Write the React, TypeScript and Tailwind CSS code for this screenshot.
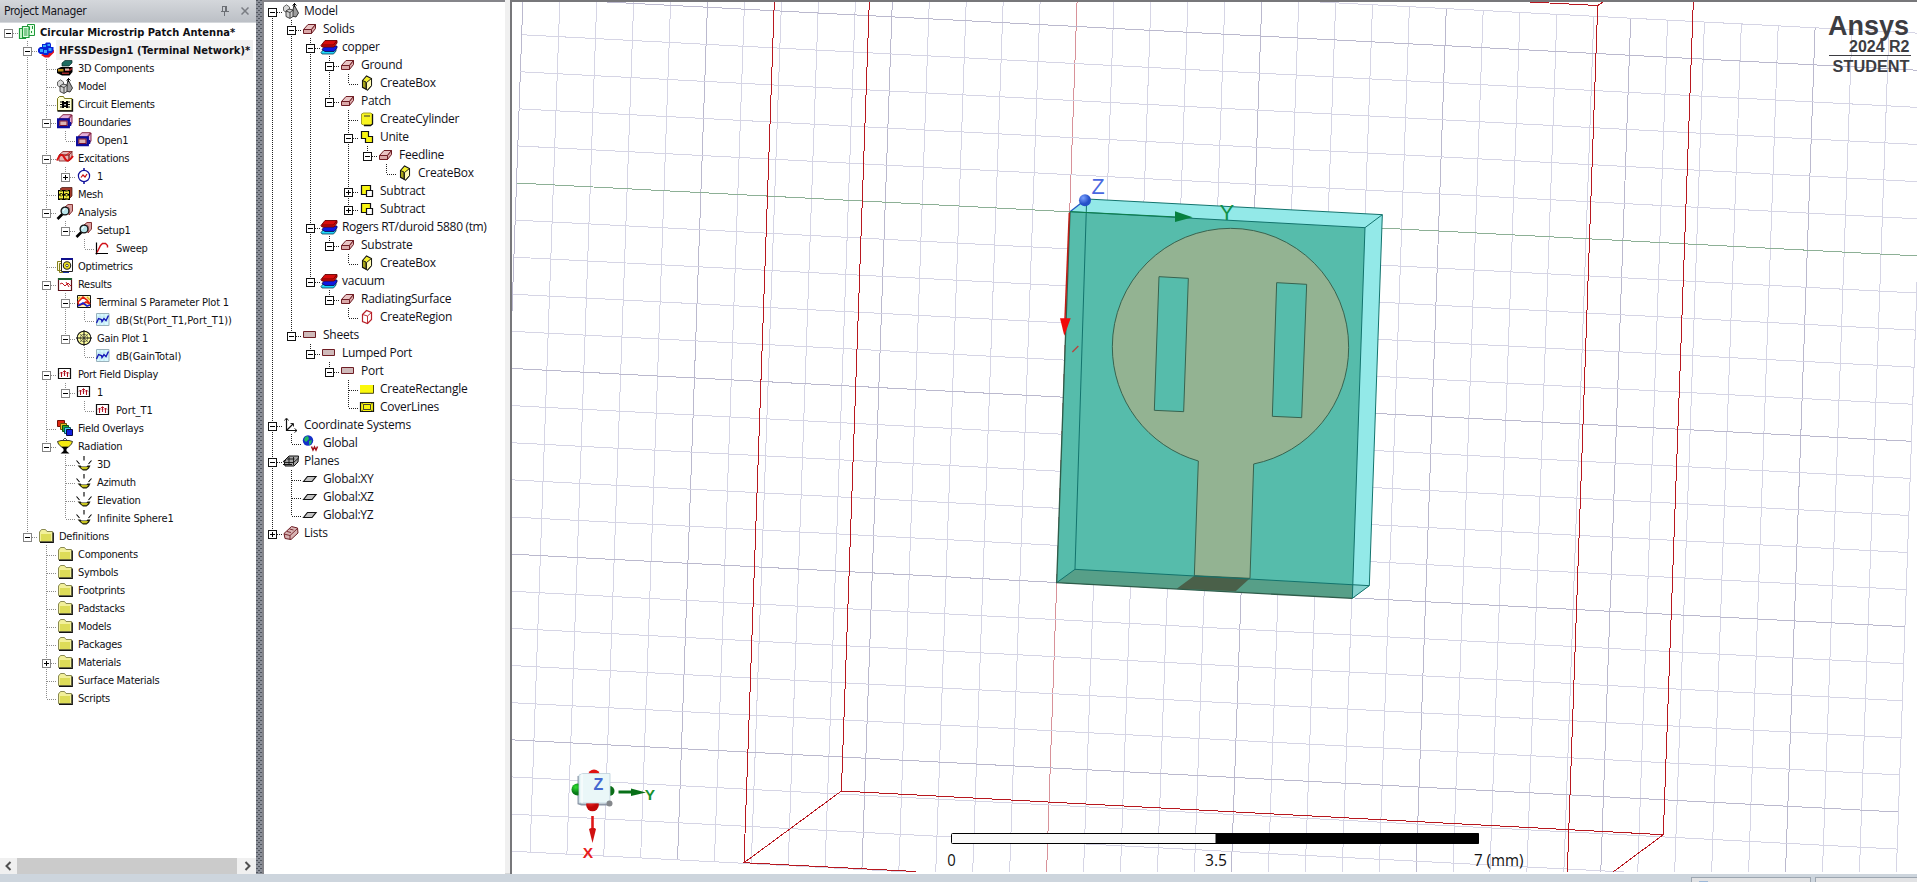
import React from "react";

type Row = [level: number, label: string, icon: string, mark?: "-" | "+", style?: string];

const BOLD = "ml-[2px] px-[3px] leading-[18px] font-bold tracking-[0.04px]";

const project: Row[] = [
  [0, "Circular Microstrip Patch Antenna*", "project", "-", BOLD],
  [1, "HFSSDesign1 (Terminal Network)*", "hfss", "-", `${BOLD} bg-[#f1f1f1]`],
  [2, "3D Components", "comp3d"],
  [2, "Model", "model"],
  [2, "Circuit Elements", "circuit"],
  [2, "Boundaries", "boundary", "-"],
  [3, "Open1", "boundary"],
  [2, "Excitations", "excite", "-"],
  [3, "1", "source", "+"],
  [2, "Mesh", "mesh"],
  [2, "Analysis", "analysis", "-"],
  [3, "Setup1", "analysis", "-"],
  [4, "Sweep", "sweep"],
  [2, "Optimetrics", "opti"],
  [2, "Results", "results", "-"],
  [3, "Terminal S Parameter Plot 1", "splot", "-", "pl-[5px] tracking-[-0.18px]"],
  [4, "dB(St(Port_T1,Port_T1))", "trace", undefined, "pl-[5px] tracking-[0.02px]"],
  [3, "Gain Plot 1", "gain", "-"],
  [4, "dB(GainTotal)", "trace", undefined, "pl-[5px] tracking-[-0.1px]"],
  [2, "Port Field Display", "portfield", "-"],
  [3, "1", "portfield", "-"],
  [4, "Port_T1", "portfield", undefined, "pl-[5px] tracking-[0px]"],
  [2, "Field Overlays", "overlays"],
  [2, "Radiation", "radiation", "-"],
  [3, "3D", "sphere"],
  [3, "Azimuth", "sphere"],
  [3, "Elevation", "sphere"],
  [3, "Infinite Sphere1", "sphere", undefined, "pl-[5px] tracking-[-0.13px]"],
  [1, "Definitions", "folder", "-"],
  [2, "Components", "folder"],
  [2, "Symbols", "folder"],
  [2, "Footprints", "folder"],
  [2, "Padstacks", "folder"],
  [2, "Models", "folder"],
  [2, "Packages", "folder"],
  [2, "Materials", "folder", "+"],
  [2, "Surface Materials", "folder"],
  [2, "Scripts", "folder"],
];

const history: Row[] = [
  [0, "Model", "model", "-"],
  [1, "Solids", "solid", "-"],
  [2, "copper", "material", "-"],
  [3, "Ground", "solid", "-"],
  [4, "CreateBox", "box"],
  [3, "Patch", "solid", "-"],
  [4, "CreateCylinder", "cylinder"],
  [4, "Unite", "unite", "-"],
  [5, "Feedline", "solid", "-"],
  [6, "CreateBox", "box"],
  [4, "Subtract", "subtract", "+"],
  [4, "Subtract", "subtract", "+"],
  [2, "Rogers RT/duroid 5880 (tm)", "material", "-", "pl-[5px] tracking-[-0.34px]"],
  [3, "Substrate", "solid", "-"],
  [4, "CreateBox", "box"],
  [2, "vacuum", "material", "-"],
  [3, "RadiatingSurface", "solid", "-"],
  [4, "CreateRegion", "region"],
  [1, "Sheets", "sheet", "-"],
  [2, "Lumped Port", "sheet", "-"],
  [3, "Port", "sheet", "-"],
  [4, "CreateRectangle", "rect"],
  [4, "CoverLines", "cover"],
  [0, "Coordinate Systems", "axes", "-"],
  [1, "Global", "global"],
  [0, "Planes", "planes", "-"],
  [1, "Global:XY", "plane"],
  [1, "Global:XZ", "plane"],
  [1, "Global:YZ", "plane"],
  [0, "Lists", "lists", "+"],
];

const icons: Record<string, React.ReactNode> = {
  project: (
    <>
      <path d="M8.500 .5h7v11h-7z" fill="#eaffea" stroke="#1f9a3a" />
      <path d="M10 3h1v3h-1zM13 2h1v3h-1zM12 7h1v2h-1z" fill="#1f9a3a" />
      <path d="M.5 4.500h6v10h-6z" fill="#d7ffd7" stroke="#1f9a3a" strokeWidth="1.200" />
      <path d="M3.500 2.500h6.500v11h-6.500z" fill="#e4ffe4" stroke="#1f9a3a" strokeWidth="1.200" />
      <path d="M5 5h3.500M5 7h3.500M5 9h3.500M5 11h3.500" stroke="#1f9a3a" />
    </>
  ),
  hfss: (
    <>
      <path d="M3 13l4 2.500h4l5-5V8L6 11z" fill="#e01020" />
      <path d="M4 2h3l1-1.500h4L13 2v3h2.500v4l-2 2H11l-1 2H6l-1-1H2l-2-2V7l2-2h2z" fill="#0a24d8" />
      <path d="M5 3h3v2H5zM9.500 2h2.500v2H9.500zM2 7h3v3H2zM6 8h3v3H6zM10.500 6h3v3h-3z" fill="#35a8ff" />
    </>
  ),
  comp3d: (
    <>
      <path d="M5 3l3-2.500h7V3l-3 3H5z" fill="#1d6b60" stroke="#0b2d2a" strokeWidth=".7" />
      <path d="M0 9l4-2h11.500v5l-3 3.500H5L0 13z" fill="#000" />
      <path d="M1 9h5.500v2.500H1z" fill="#b58a1c" />
      <path d="M8 9h5l2-1.500v2L13 11H8z" fill="#9a1f1f" />
      <path d="M8 8.500h4v2H8z" fill="#e0b8b0" />
      <path d="M5 12.500h7v1.500H5z" fill="#a02828" />
    </>
  ),
  model: (
    <>
      <path d="M.5 4l3-2.200 3 2.200v3.500l-3 2-3-2z" fill="#d9d9d9" stroke="#555" strokeWidth=".9" />
      <path d="M11 1.500l4.500 8.500-2.500 4-4-1z" fill="#9c9c9c" stroke="#222" strokeWidth=".9" />
      <path d="M11.500 0v4M9.500 2.500l2-2 2 2" stroke="#111" fill="none" />
      <path d="M3 8l3-2 4 1v6.500l-3 2-4-2z" fill="#cfcfcf" stroke="#333" strokeWidth=".9" />
      <path d="M3 8l4 1.500V15M7 9.500L10 7" stroke="#333" strokeWidth=".9" fill="none" />
    </>
  ),
  circuit: (
    <>
      <path d="M.5 14.500v-12l2-2h4l1 2h7.500v12z" fill="#ffffd8" stroke="#77771a" />
      <path d="M.5 15h15V3" stroke="#111" strokeWidth="1.300" fill="none" />
      <path d="M5 5h2v1h2V5h2v7H9v-1H7v1H5z" fill="#000" />
      <path d="M3 6h2M3 8.500h2M3 11h2M11 6h2M11 8.500h2M11 11h2" stroke="#000" />
      <path d="M7.300 8h1.500v1.500H7.300z" fill="#fff" />
    </>
  ),
  boundary: (
    <>
      <path d="M2 4.500L6 .7h8.500L11 5zM12 13l3-4V1L12 5z" fill="#e3b0dc" stroke="#7a1230" strokeWidth=".9" />
      <path d="M1.200 5.500h10.500v7.500H1.200z" fill="#dcb4b4" stroke="#0c0c9c" strokeWidth="2.400" />
      <path d="M2.800 7h7.200v4.500H2.800z" fill="none" stroke="#7a1230" strokeWidth="1" />
      <path d="M13.500 12V8" stroke="#0c0c9c" strokeWidth="1.500" />
    </>
  ),
  excite: (
    <>
      <path d="M2 5l4-3.500h9l-3 3.500zM2 5h10v6H2zM12 5l3-3.500V8l-3 3z" fill="#e5b6b6" stroke="#8a2a2a" strokeWidth=".9" />
      <path d="M0 10.500C2 5 5 3 7 7s4 6 9-1" stroke="#d81010" strokeWidth="2" fill="none" />
      <path d="M8 6l5-4" stroke="#d81010" />
    </>
  ),
  source: (
    <>
      <circle cx="8" cy="8" r="5.600" fill="#fff" stroke="#10109c" strokeWidth="1.200" />
      <path d="M8 0v3M8 13v3" stroke="#10109c" strokeWidth="1.500" />
      <path d="M5 9.500L7 7l2 2 2-3" stroke="#c81010" fill="none" strokeWidth="1.200" />
    </>
  ),
  mesh: (
    <>
      <path d="M3 3l2-1.500h10V10l-2 2z" fill="#a43a2a" stroke="#401008" strokeWidth=".7" />
      <path d="M1 4h12v10H1z" fill="#000" />
      <path d="M2 5l2 1 2-1v3L4 7 2 8zM7 5l2.500 1L12 5v3L9.500 7 7 8zM2 9.500l2 1 2-1v3.300l-2-1-2 1zM7 9.500l2.500 1 2.500-1v3.300l-2.500-1-2.500 1zM4 8h1v1.500H4zM9 8h1v1.500H9z" fill="#f8f540" />
      <path d="M3 5h2M8.500 5H11M3 13h2M8.500 13H11M2.500 9h3M8 9h3" stroke="#f8f540" strokeWidth=".8" />
    </>
  ),
  analysis: (
    <>
      <path d="M8 3l3-2.500h4.500V7L12 11V4z" fill="#d9a3a3" stroke="#7a2020" strokeWidth=".9" />
      <path d="M.5 15l5-5" stroke="#000" strokeWidth="2.600" />
      <circle cx="8" cy="7" r="3.900" fill="#b8e4ea" stroke="#111" strokeWidth="1.300" />
      <path d="M6 7l2-2.500" stroke="#fff" strokeWidth="1.200" />
    </>
  ),
  sweep: (
    <>
      <path d="M1.500 2.500v12M.5 13.500h12.500" stroke="#000" strokeWidth="1.200" />
      <path d="M2 12.500L5.500 5.500 7.500 3.500h3l2 2v2" stroke="#d01018" strokeWidth="1.400" fill="none" />
    </>
  ),
  opti: (
    <>
      <path d="M.5 3.500h8v9h-8zM2.500 5.500h8v9h-8z" fill="#fffbe0" stroke="#85801c" />
      <path d="M4.500 1.500h11v12h-11z" fill="#fff" stroke="#222" />
      <path d="M4 0h12v2H4z" fill="#10108c" />
      <circle cx="10" cy="7.500" r="3.700" fill="#f4ea20" stroke="#222" strokeWidth="1.100" />
      <circle cx="10" cy="7.500" r="1.300" fill="#fff" stroke="#222" strokeWidth=".8" />
      <path d="M6 14.500h6" stroke="#1530a0" />
    </>
  ),
  results: (
    <>
      <path d="M1.500 2.500h13v12h-13z" fill="#fff" stroke="#5a1018" strokeWidth="1.200" />
      <path d="M1 2h14v2H1z" fill="#1d5c30" />
      <path d="M3 8l2-1 3 3 3-3 3 3M9 6l3 5" stroke="#c01820" strokeWidth="1" fill="none" />
    </>
  ),
  splot: (
    <>
      <path d="M1.500 1.500h13v12h-13z" fill="#fff6b8" stroke="#111" />
      <path d="M2 8l5-5 4 3 3 4-4-2-3 2-4 1z" fill="#fff" stroke="#e02010" strokeWidth="1.600" />
      <path d="M2 12l5-3 4 3 3-1" stroke="#1820d0" strokeWidth="1.600" fill="none" />
      <path d="M11 3l3 3M2 5l2-2" stroke="#e0b020" strokeWidth="1.500" />
    </>
  ),
  trace: (
    <>
      <path d="M1.500 1.500h12.500v12h-12.500z" fill="#d8f8ff" stroke="#9ab2bc" />
      <path d="M2 5h12M2 9h12M5 2v11M9 2v11" stroke="#b6dfe8" strokeWidth=".7" />
      <path d="M1.500 11l2-4.500 3 1 .5 2 2-3 2 2 2.500-5" stroke="#1418b8" strokeWidth="1.400" fill="none" />
    </>
  ),
  gain: (
    <>
      <circle cx="8" cy="8" r="6.800" fill="#ffffa0" stroke="#111" strokeWidth="1.100" />
      <circle cx="8" cy="8" r="3.800" fill="none" stroke="#333" strokeWidth=".6" />
      <path d="M8 0v16M0 8h16" stroke="#111" strokeWidth="1" />
      <path d="M3.500 3.500l9 9M12.500 3.500l-9 9" stroke="#333" strokeWidth=".6" />
    </>
  ),
  portfield: (
    <>
      <path d="M1.500 2.500h12v10h-12z" fill="#fff" stroke="#111" strokeWidth="1.200" />
      <path d="M4.500 11V6M7.500 10V5M10.500 11V6" stroke="#b01020" strokeWidth="1.100" />
      <path d="M3 7.500L4.500 6 6 7.500M6 6l1.500-1.500L9 6M9 7.500L10.500 6 12 7.500" stroke="#b01020" fill="none" strokeWidth=".9" />
    </>
  ),
  overlays: (
    <>
      <path d="M.5 .5h7v6h-7z" fill="#e02810" stroke="#701008" />
      <path d="M3.500 3.500h6v6h-6z" fill="#e8c020" stroke="#705008" />
      <path d="M5.500 5.500h6v6h-6z" fill="#20b030" stroke="#0a5010" />
      <path d="M7.500 7.500h6v6h-6z" fill="#40d8e8" stroke="#105060" />
      <path d="M9.500 9.500h6v6h-6z" fill="#1020e0" stroke="#080840" />
    </>
  ),
  radiation: (
    <>
      <path d="M6 2l2-2 2 2" stroke="#555" fill="none" />
      <path d="M.5 3.500L4 2.500h8l3.500 1-1 2.500-3 3h-7l-3-3z" fill="#f4ea10" stroke="#222" strokeWidth=".9" />
      <path d="M4.500 9h7l-2 2v2l3 2.500h-9l3-2.500v-2z" fill="#000" />
    </>
  ),
  sphere: (
    <>
      <path d="M8 0v4.500M.5 4.500l3 3.500M15.500 4.500l-3 3.500" stroke="#000" strokeWidth="1.100" />
      <path d="M1.500 9.500h3l1 1h5l1-1h3l-1.500 3-2.500 2h-3.500l-2.500-2z" fill="#1a1a08" />
      <path d="M4.500 11h8l-2 2.200h-4z" fill="#c8c420" />
    </>
  ),
  folder: (
    <>
      <path d="M1.500 13.500V4l2-2.500h4L9 3.500h5.500v10z" fill="#f2f09a" stroke="#8a8a52" />
      <path d="M3 6h10v7H3z" fill="#dddc58" />
      <path d="M2 14.300h13.300V4.500" stroke="#111" strokeWidth="1.200" fill="none" />
    </>
  ),
  solid: (
    <>
      <path d="M1.500 8.500L6 3.500h7.500L9.500 8.500z" fill="#e9c3c3" stroke="#6e1d24" />
      <path d="M1.500 8.500h8V12.500h-8z" fill="#dba9a9" stroke="#6e1d24" />
      <path d="M9.500 8.500l4-5v4l-4 5z" fill="#dba9a9" stroke="#6e1d24" />
    </>
  ),
  material: (
    <>
      <path d="M0 13.500L3 10h12v2l-2.500 3H1z" fill="#20d8f8" stroke="#0a3a50" strokeWidth=".8" />
      <path d="M1 10.500L4 7h12v2l-3 3.500H4z" fill="#1018e0" stroke="#080850" strokeWidth=".8" />
      <path d="M0 6.500L4 1.500h12v2.500l-3 4H1z" fill="#d80c0c" stroke="#600" strokeWidth=".9" />
      <path d="M1 6h11.500L15.500 2" stroke="#600" strokeWidth=".8" fill="none" />
    </>
  ),
  box: (
    <>
      <path d="M3.500 5.500l4-4.500 5 2.500v7l-4 4.500-5-2.500z" fill="#f4f030" stroke="#111" strokeWidth="1.100" />
      <path d="M3.500 5.500l3.500 1.500v7l-3.500-2z" fill="#a8a418" stroke="#111" strokeWidth=".9" />
      <path d="M7.500 7.500l5-4v7l-4 4.500-1-.5z" fill="#fffbb0" stroke="#111" strokeWidth=".9" />
    </>
  ),
  cylinder: (
    <>
      <path d="M2.500 3l2-1h7l2 1v10l-2 1h-7l-2-1z" fill="#f8f420" stroke="#9a9618" strokeWidth=".9" />
      <path d="M5 5h6" stroke="#333" />
      <path d="M13.500 3v10l-2 1.500H5" stroke="#111" strokeWidth="1.300" fill="none" />
    </>
  ),
  unite: <path d="M2.500 2.500h7v5h4v6h-7v-4h-4z" fill="#f8f410" stroke="#111" strokeWidth="1.200" />,
  subtract: (
    <>
      <path d="M2.500 2.500h9v9h-9z" fill="#f8f410" stroke="#111" strokeWidth="1.200" />
      <path d="M7.500 7.500h6v6h-6z" fill="#fff" stroke="#111" strokeWidth="1.200" />
    </>
  ),
  region: (
    <>
      <path d="M3.500 5.500l4-4 5 2v7l-4 4-5-2z" fill="#fff" stroke="#b82028" strokeWidth="1.200" />
      <path d="M3.500 5.500l5 1.500 4-3.500M8.500 7v7.500" fill="none" stroke="#b82028" strokeWidth=".9" />
    </>
  ),
  sheet: <path d="M1.500 4.500h12v6h-12z" fill="#cfbaba" stroke="#6e1d24" />,
  rect: (
    <>
      <path d="M1 4h13v8H1z" fill="#fbf80c" />
      <path d="M1 12.300h13.500V4" stroke="#4c4a10" strokeWidth="1" fill="none" />
    </>
  ),
  cover: (
    <>
      <path d="M1.500 3.500h13v9h-13z" fill="#f8f410" stroke="#111" strokeWidth="1.200" />
      <path d="M4.500 5.500h7v5h-7z" fill="#f8f410" stroke="#333" strokeWidth=".9" />
      <path d="M2 3.500l2.500 2M14 3.500l-2.500 2M2 12.500l2.500-2M14 12.500l-2.500-2" stroke="#333" strokeWidth=".7" />
    </>
  ),
  axes: (
    <>
      <path d="M3.500 2v11.500H14M4 13l6-6" stroke="#111" strokeWidth="1.200" fill="none" />
      <path d="M1.500 3.500l2-2.500 2 2.500M11.500 11.500l2.500 2-2.500 2M7.500 6.500h3v3" stroke="#111" fill="none" strokeWidth=".9" />
    </>
  ),
  global: (
    <>
      <circle cx="6" cy="5.500" r="5.200" fill="#1430c8" />
      <path d="M3 2l3-1 1 3-3 3-2-2zM7 6l3-1-1 4-2 1z" fill="#20b860" />
      <path d="M9.500 11.500L11 15l1.500-3 1.500 3 1.500-3.500" stroke="#a01018" strokeWidth="1.500" fill="none" />
    </>
  ),
  planes: (
    <>
      <path d="M1 8l5-5h9.500l-.5 6-4 4H2z" fill="#a4a4a4" stroke="#111" />
      <path d="M1 9.500h9.500l4.500-4M3.500 6h8M6 4v8M10.500 4v8" stroke="#111" strokeWidth=".9" fill="none" />
      <path d="M0 8.500l3-1M0 11.500h9" stroke="#111" />
    </>
  ),
  plane: <path d="M1.500 10.500l4-5h8.500l-4 5z" fill="#c4c4c4" stroke="#111" strokeWidth="1.200" />,
  lists: (
    <>
      <path d="M1 8.500l7.500-7L14.500 3l.5 5-7 6.500-6-1z" fill="#d8b4b4" stroke="#6e1d24" />
      <path d="M1 9l6 1.500 7.500-7M7 10.500v4M4 6.500l4 1M6.500 4l4 1" stroke="#6e1d24" strokeWidth=".9" fill="none" />
    </>
  ),
};

function Icon({ name }: { name: string }) {
  return (
    <svg viewBox="0 0 16 16" className="h-4 w-4 shrink-0 overflow-visible">
      {icons[name]}
    </svg>
  );
}

/** True when a later sibling at `level` follows row `i` before the branch closes. */
function continues(rows: Row[], i: number, level: number) {
  for (let j = i + 1; j < rows.length; j++) {
    if (rows[j][0] === level) return true;
    if (rows[j][0] < level) return false;
  }
  return false;
}

function Tree({ rows, line, box, font, text }: { rows: Row[]; line: string; box: string; font: string; text: string }) {
  return (
    <div className={`flex flex-col ${font}`}>
      {rows.map(([level, label, icon, mark, style], i) => (
        <div key={i} className="flex h-[18px] items-center whitespace-nowrap">
          {Array.from({ length: level + 1 }, (_, l) => {
            const own = l === level;
            const below = continues(rows, i, l);
            const above = own && (l > 0 || i > 0);
            const y1 = above || !own ? 0 : 10;
            const y2 = below ? 18 : 10;
            return (
              <svg key={l} className="h-[18px] w-[19px] shrink-0" shapeRendering="crispEdges">
                {(above || below) && (own || below) && (
                  <path d={`M8.500 ${y1}V${y2}`} stroke={line} strokeDasharray="1 1" />
                )}
                {own && <path d="M9 10.500H19" stroke={line} strokeDasharray="1 1" />}
                {own && mark && (
                  <>
                    <path d="M4.500 6.500h8v8h-8z" fill="#fff" stroke={box} />
                    <path d={mark === "+" ? "M6 10.500h5M8.500 8v5" : "M6 10.500h5"} stroke="#000" />
                  </>
                )}
              </svg>
            );
          })}
          <Icon name={icon} />
          <span className={style ?? text}>{label}</span>
        </div>
      ))}
    </div>
  );
}

const O = [1069.7, 211.8];
const U = [36.88, 1.92];
const V = [-1.298, 37.07];
const at = (k: number, j: number) => `${O[0] + k * U[0] + j * V[0]} ${O[1] + k * U[1] + j * V[1]}`;
const range = (a: number, b: number) => Array.from({ length: b - a + 1 }, (_, i) => a + i);

function Grid() {
  const tone = (n: number, axis: string) => (n === 0 ? axis : n % 5 === 0 ? "#bbb9ce" : "#d6d5e5");
  return (
    <g fill="none" shapeRendering="crispEdges">
      {range(-15, 23).map((k) => (
        <path key={`k${k}`} d={`M${at(k, -6)}L${at(k, 18)}`} stroke={tone(k, "#d8929a")} />
      ))}
      {range(-6, 18).map((j) => (
        <path key={`j${j}`} d={`M${at(-15, j)}L${at(23, j)}`} stroke={tone(j, "#8db096")} />
      ))}
    </g>
  );
}

function Antenna() {
  return (
    <g transform="translate(1030 160) scale(.33333)" strokeWidth="3" strokeLinejoin="round">
      <path d="M120 155L170 117 1057 164 1018 1277 967 1315 80 1268z" fill="#93e9e8" />
      <path d="M120 155L1005 203 967 1315 80 1268z" fill="#56bcab" />
      <path d="M80 1268L135 1228 1018 1277 967 1315z" fill="#579f88" />
      <path d="M967 1315L969 1273 1018 1277z" fill="#86d3cf" />
      <path
        d="M505 903A356 356 0 0 1 247 560A354.500 355 0 0 1 601.500 205A354.500 355 0 0 1 956 562A356 356 0 0 1 671 912L660 1255 493 1247zM387 350L373 751 461 755 475 355zM740 368L727 769 815 773 830 373z"
        fill="#93b392"
        fillRule="evenodd"
        stroke="#37624e"
      />
      <path d="M493 1247L660 1255 617 1294 440 1286z" fill="#4a6049" />
      <g fill="none" stroke="#12726c" shapeRendering="crispEdges">
        <path d="M170 117L1057 164 1018 1277 967 1315M1057 164L1005 203 967 1315M120 155L1005 203" />
        <path d="M170 117L135 1228 80 1268M135 1228L1018 1277" />
      </g>
      <path d="M120 155L80 1268 967 1315" stroke="#2f5c4a" strokeWidth="4" fill="none" />
      <path d="M120 155L165 120" stroke="#2058c0" strokeWidth="4" />
      <path d="M120 155L440 171" stroke="#0c7e48" />
      <path d="M435 154V186L488 172z" fill="#07803f" />
      <path d="M118 158L105 478" stroke="#c01c14" strokeWidth="4.500" />
      <path d="M90 475H122L103 527z" fill="#f00a0a" />
      <path d="M127 576L145 558" stroke="#b8433c" strokeWidth="4" />
      <circle cx="165" cy="121" r="18" fill="url(#blue)" />
    </g>
  );
}

function Triad() {
  return (
    <g>
      <circle cx="594" cy="775.500" r="6" fill="#e01212" />
      <circle cx="609.500" cy="791" r="5" fill="#0c6e18" />
      <path d="M578.500 776v27.500l3 1h28" fill="none" stroke="#8e98a8" strokeWidth="2" />
      <circle cx="577.500" cy="789.500" r="6" fill="url(#green)" />
      <circle cx="592.500" cy="805" r="6.300" fill="url(#red)" />
      <path d="M579 775l4-1.500h27V803h-31z" fill="#eaf7f8" stroke="#bccfda" strokeWidth=".8" />
      <path d="M582 774v29" stroke="#fff" />
      <circle cx="609.500" cy="803.500" r="3" fill="#85888c" />
      <path d="M618.500 792H633" stroke="#087018" strokeWidth="3" />
      <path d="M631 788.500v7.500l15-3.500z" fill="#087018" />
      <path d="M592.500 816v18" stroke="#e01818" strokeWidth="2.600" />
      <path d="M589 829l2-1h3.500l1.500 1-3.500 14z" fill="#d01010" />
      <g fontFamily="Liberation Sans, sans-serif" fontWeight="bold" textAnchor="middle">
        <text x="598.500" y="790" fontSize="16" fill="#4468d0">Z</text>
        <text x="650" y="799.500" fontSize="15.500" fill="#18902c">Y</text>
        <text x="588" y="857.500" fontSize="15.500" fill="#e81c1c">X</text>
      </g>
    </g>
  );
}

function Viewport() {
  return (
    <svg viewBox="512 2 1405 870" className="h-[870px] w-[1405px]">
      <defs>
        <radialGradient id="blue" cx=".35" cy=".3">
          <stop offset="0" stopColor="#7aa0ff" />
          <stop offset="1" stopColor="#2450c8" />
        </radialGradient>
        <radialGradient id="green" cx=".35" cy=".3">
          <stop offset="0" stopColor="#30e030" />
          <stop offset="1" stopColor="#087818" />
        </radialGradient>
        <radialGradient id="red" cx=".35" cy=".2">
          <stop offset="0" stopColor="#ff3030" />
          <stop offset="1" stopColor="#c00808" />
        </radialGradient>
      </defs>
      <Grid />
      <Antenna />
      <g fill="none" stroke="#b81820" shapeRendering="crispEdges">
        <path d="M774.300 2L744 862.700 916 871.500M869.300 2L841.400 791 1663.300 834.700 1693.300 2M841.400 791L744 862.700M1663.300 834.700L1613 872" />
        <path d="M1530 2L1597.700 5.500 1567.300 872M1597.700 5.500L1603 2" />
      </g>
      <Triad />
      <g fontFamily="Liberation Sans, sans-serif">
        <text x="1091.500" y="194" fontSize="21.500" fill="#4a68e0">Z</text>
        <text x="1219.500" y="220" fontSize="22" fill="#109048">Y</text>
      </g>
      <rect x="951.500" y="833.500" width="527" height="10" rx="1" fill="#fafafa" stroke="#000" />
      <rect x="1215.500" y="833" width="263.500" height="11" rx="1" fill="#000" />
      <g fontFamily="Open Sans, sans-serif" fontSize="15.500" fill="#111">
        <text x="951.500" y="866" textAnchor="middle" textLength="8.500" lengthAdjust="spacingAndGlyphs">0</text>
        <text x="1216" y="866" textAnchor="middle" textLength="22" lengthAdjust="spacingAndGlyphs">3.5</text>
        <text x="1474" y="866" textLength="49.500" lengthAdjust="spacingAndGlyphs">7 (mm)</text>
      </g>
      <g fontFamily="Liberation Sans, sans-serif" fontWeight="bold" fill="#3d3d42" textAnchor="end">
        <text x="1909" y="34.500" fontSize="27">Ansys</text>
        <text x="1909.500" y="52" fontSize="16">2024 R2</text>
        <path d="M1829 55.500H1911" stroke="#3d3d42" />
        <text x="1909.500" y="72" fontSize="16.300">STUDENT</text>
      </g>
    </svg>
  );
}

function Splitter() {
  return (
    <svg className="h-[874px] w-[6px] shrink-0" shapeRendering="crispEdges">
      <defs>
        <pattern id="dots" width="4" height="4" patternUnits="userSpaceOnUse">
          <rect width="4" height="4" fill="#8b8f98" />
          <path d="M0 0h2v1H0zM2 2h2v1H2z" fill="#51565f" />
        </pattern>
      </defs>
      <rect width="6" height="874" fill="url(#dots)" />
    </svg>
  );
}

export default function App() {
  return (
    <div className="flex h-[882px] w-[1917px] flex-col overflow-hidden bg-[#cdd5dd]">
      <div className="flex h-[874px]">
        <section className="flex w-[256px] shrink-0 flex-col bg-white">
          <header className="flex h-[23px] shrink-0 items-center border-b border-[#d5d8dc] bg-linear-to-b from-[#d4d7db] to-[#bcc0c6] pl-1 font-['DejaVu_Sans_Condensed'] text-[12px] text-[#16161c]">
            <span className="flex-1 tracking-[-0.35px]">Project Manager</span>
            <svg className="mr-3 h-[10px] w-[9px]" fill="none" stroke="#6c6f75">
              <path d="M2 .5h5M2.500 .5v5M5.500 .5v5M6.500 .5v5M.5 5.500h8M4.500 6v4" shapeRendering="crispEdges" />
            </svg>
            <svg className="mr-[7px] h-2 w-2" stroke="#7a7d83" strokeWidth="1.500">
              <path d="M.5 .5l7 7M7.500 .5l-7 7" />
            </svg>
          </header>
          <div className="h-[835px]">
            <Tree
              rows={project}
              line="#8c8c8c"
              box="#848484"
              font="font-['DejaVu_Sans_Condensed'] text-[11px] text-[#101014] [&_span]:pt-[2px]"
              text="pl-[5px] tracking-[-0.28px]"
            />
          </div>
          <div className="flex h-4 items-center bg-[#f0f0f0]">
            <svg className="h-4 w-[17px]" fill="none" stroke="#505050" strokeWidth="2">
              <path d="M10.500 4L6.500 8l4 4" />
            </svg>
            <div className="h-4 flex-1 bg-[#cbcbcb]" />
            <svg className="h-4 w-[19px]" fill="none" stroke="#505050" strokeWidth="2">
              <path d="M8.500 4l4 4-4 4" />
            </svg>
          </div>
        </section>
        <Splitter />
        <section className="w-[243px] shrink-0 border-t-2 border-l-2 border-[#85858a] bg-white">
          <Tree
            rows={history}
            line="#222"
            box="#111"
            font="font-['Open_Sans'] text-[12px] text-[#101018]"
            text="pl-[5px] tracking-[-0.26px]"
          />
        </section>
        <div className="w-[5px] shrink-0 border-b border-[#d8d8d8] bg-[#f0f0f0]" />
        <main className="w-[1407px] shrink-0 border-t-2 border-l-2 border-[#77777a] bg-white">
          <Viewport />
        </main>
      </div>
      <footer className="flex h-2 items-end justify-end gap-1 border-t border-[#cdd5dd] pt-[2px]">
        <div className="h-full w-[120px] border border-b-0 border-[#9da6b0] bg-[#e1e2e4]">
          <div className="ml-[7px] mt-[3px] h-[2px] w-[9px] bg-[#9db8d8]" />
        </div>
        <div className="h-full w-[102px] border border-r-0 border-b-0 border-[#9da6b0] bg-[#e1e2e4]" />
      </footer>
    </div>
  );
}
